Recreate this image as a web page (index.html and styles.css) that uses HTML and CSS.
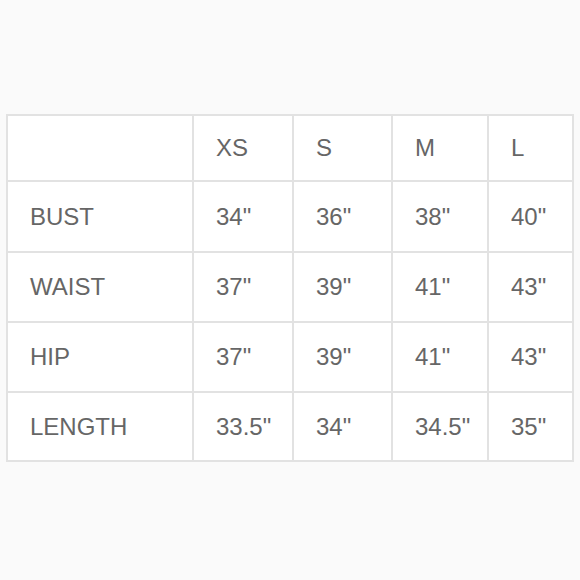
FILE: index.html
```html
<!DOCTYPE html>
<html>
<head>
<meta charset="utf-8">
<link rel="stylesheet" href="styles.css">
</head>
<body>
<div class="chart">
  <div class="cell"></div>
  <div class="cell">XS</div>
  <div class="cell">S</div>
  <div class="cell">M</div>
  <div class="cell">L</div>

  <div class="cell">BUST</div>
  <div class="cell">34"</div>
  <div class="cell">36"</div>
  <div class="cell">38"</div>
  <div class="cell">40"</div>

  <div class="cell">WAIST</div>
  <div class="cell">37"</div>
  <div class="cell">39"</div>
  <div class="cell">41"</div>
  <div class="cell">43"</div>

  <div class="cell">HIP</div>
  <div class="cell">37"</div>
  <div class="cell">39"</div>
  <div class="cell">41"</div>
  <div class="cell">43"</div>

  <div class="cell">LENGTH</div>
  <div class="cell">33.5"</div>
  <div class="cell">34"</div>
  <div class="cell">34.5"</div>
  <div class="cell">35"</div>
</div>
</body>
</html>
```
FILE: styles.css
```css
html, body {
  margin: 0;
  padding: 0;
  background: #fafafa;
  width: 580px;
  height: 580px;
  overflow: hidden;
}

body {
  padding: 114px 0 0 6px;
  box-sizing: border-box;
  font-family: "Liberation Sans", Arial, sans-serif;
}

.chart {
  display: grid;
  grid-template-columns: 184px 98px 97px 94px 83px;
  grid-template-rows: 64px 69px 68px 68px 67px;
  gap: 2px;
  padding: 2px;
  background: #e2e2e2;
  width: max-content;
}

.cell {
  background: #ffffff;
  color: #666666;
  font-size: 24px;
  display: flex;
  align-items: center;
  padding-left: 22px;
}
```
